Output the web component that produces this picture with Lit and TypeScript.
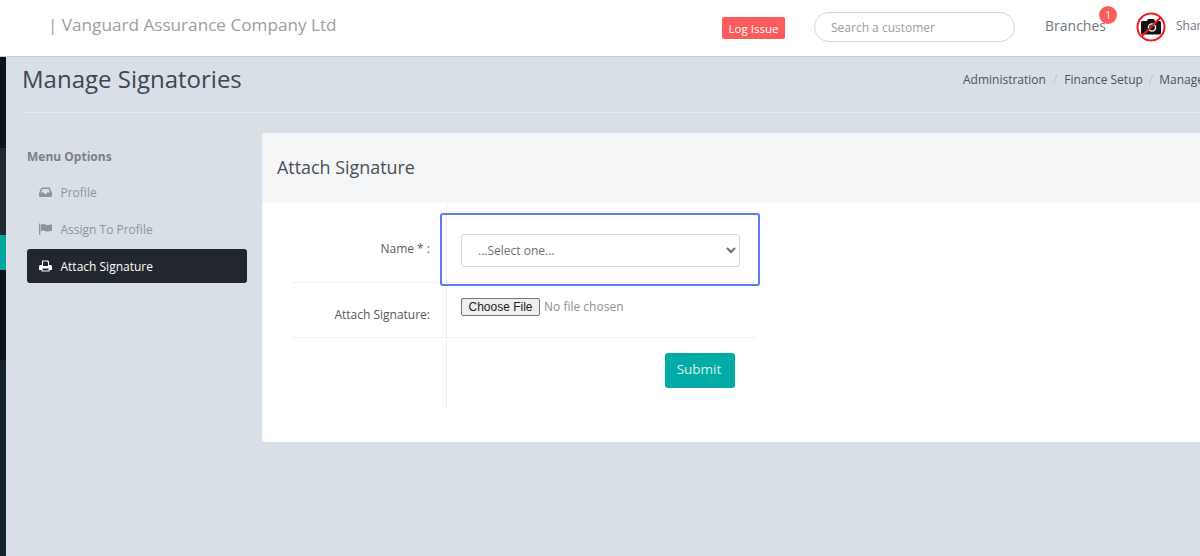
import { LitElement, html, css } from "lit";
import { customElement } from "lit/decorators.js";

@customElement("app-root")
export class AppRoot extends LitElement {
  static styles = css`
    :host { display: block; width: 1200px; height: 556px; overflow: hidden; background: #d9dfe7; font-family: "Open Sans", sans-serif; color: #4a4f55; }
    * { box-sizing: border-box; }
    .top { height: 57px; background: #fff; border-bottom: 1px solid #c6ccd3; display: flex; align-items: center; position: relative; white-space: nowrap; overflow: hidden; }
    .top > * { flex: none; }
    .company { margin-left: 48px; width: 674px; font-size: 17.15px; color: #9a9ea3; margin-top: -7px; }
    .log { width: 63px; height: 22px; background: #fd5c5c; color: #fff; border-radius: 2px; font-size: 11.5px; display: flex; align-items: center; justify-content: center; margin-right: 29px; }
    .search { width: 201px; height: 30px; border: 1px solid #d3d6da; border-radius: 15px; font-size: 12px; color: #9a9ea3; display: flex; align-items: center; padding-left: 16px; margin-right: 30px; margin-top: -2px; }
    .branches { font-size: 14px; color: #74787d; width: 91px; position: relative; margin-top: -5px; }
    .badge { position: absolute; left: 54px; top: -10px; width: 18px; height: 18px; border-radius: 50%; background: #fd5c5c; color: #fff; font-size: 10px; display: flex; align-items: center; justify-content: center; }
    .avatar { width: 30px; height: 30px; margin-right: 10px; margin-top: -2px; display: block; }
    .user { font-size: 12px; color: #74787d; margin-top: -5px; }

    .body { display: flex; height: 499px; }
    .strip { width: 6px; flex: none; display: flex; flex-direction: column; }
    .s1 { height: 91px; background: #0d1419; }
    .s2 { height: 87px; background: #1f2a30; }
    .s3 { height: 35px; background: #00a79d; }
    .s4 { height: 90px; background: #0d1419; }
    .s5 { flex: 1; background: #17232c; }

    .main { flex: 1; min-width: 0; padding-left: 16px; }
    .head { height: 56px; border-bottom: 1px solid #e9edf1; display: flex; align-items: center; white-space: nowrap; padding-bottom: 10px; overflow: hidden; }
    .head h1 { margin: -3px 0 0; width: 941px; font-weight: 400; font-size: 24px; color: #3d4752; flex: none; }
    .crumbs { font-size: 12px; color: #4c5258; display: flex; margin-top: -1px; }
    .crumbs i { font-style: normal; color: #bcc2c9; margin: 0 7px; }
    .crumbs i.tight { margin: 0 6px; }

    .content { display: flex; padding: 20px 0 0 5px; align-items: flex-start; }
    .menu { width: 220px; flex: none; margin-right: 15px; }
    .menu h2 { margin: 0; font-size: 12px; font-weight: 700; color: #7b8086; height: 42px; padding-top: 15px; line-height: 17px; }
    .item { height: 34px; margin-bottom: 3px; padding-left: 12px; display: flex; align-items: center; font-size: 12px; color: #8f949a; border-radius: 3px; }
    .item svg { width: 13px; height: 12px; margin-right: 8.5px; flex: none; fill: currentColor; }
    .item.active { background: #22262e; color: #fff; }

    .card { flex: 1; height: 309px; background: #fff; border-radius: 3px 0 0 3px; position: relative; overflow: hidden; }
    .card-head { height: 70px; background: #f5f6f8; padding: 0 0 2px 15px; display: flex; align-items: center; font-size: 17.9px; color: #4a4f55; }
    .form { width: 463px; margin: 0 0 0 30px; display: grid; grid-template-columns: 155px 1fr; grid-template-rows: 80px 55px 70px; }
    .label { font-size: 12px; color: #55595e; text-align: right; padding-right: 16px; border-right: 1px solid #eeeff1; }
    .field { padding-left: 14px; }
    .r1 { border-bottom: 1px solid #eeeff1; }
    .r2 { border-bottom: 1px solid #eeeff1; }
    .label.r1 { padding-top: 38px; line-height: 16px; }
    .label.r2 { padding-top: 23px; line-height: 17px; }
    .field.r1 { padding-top: 31px; }
    .field.r2 { padding-top: 15px; }
    .field.r3 { padding-top: 15px; padding-right: 20px; display: flex; justify-content: flex-end; align-items: flex-start; }
    select { display: block; width: 279px; height: 33px; border: 1px solid #d6d9dd; border-radius: 3px; background-color: #fff; font-family: "Open Sans", sans-serif; font-size: 12px; color: #6b6f74; padding-left: 12px; outline: none; }
    input[type="file"] { display: block; font-family: "Open Sans", sans-serif; font-size: 12px; color: #8b8f94; width: 279px; }
    input[type="file"]::file-selector-button { font-family: "Liberation Sans", sans-serif; font-size: 12px; color: #222; height: 18px; padding: 0 6.5px; margin-right: 4px; border: 1px solid #767676; border-radius: 2px; background: #efefef; }
    .submit { width: 70px; height: 35px; border: 0; border-radius: 3px; background: #00aca5; color: #d9f3f1; font-family: "Open Sans", sans-serif; font-size: 13.5px; padding: 0 2px 3px 0; }
    .focus { position: absolute; left: 178px; top: 80px; width: 320px; height: 73px; border: 2px solid #5b7cf6; border-radius: 3px; pointer-events: none; }
  `;

  render() {
    return html`
      <div class="top">
        <div class="company">| Vanguard Assurance Company Ltd</div>
        <div class="log">Log Issue</div>
        <div class="search">Search a customer</div>
        <div class="branches">Branches<span class="badge">1</span></div>
        <svg class="avatar" viewBox="0 0 30 30">
          <circle cx="15" cy="15" r="13.5" fill="#fff" stroke="#ee1c25" stroke-width="2"/>
          <path fill="#111" d="M5 10.500a1.500 1.500 0 0 1 1.500-1.500h4.500l1-2h6l1 2h4.500a1.500 1.500 0 0 1 1.500 1.500V21a1.500 1.500 0 0 1-1.500 1.500h-17A1.500 1.500 0 0 1 5 21z"/>
          <circle cx="16" cy="15.500" r="3.600" fill="none" stroke="#fff" stroke-width="1.400"/>
          <path d="M24.500 5.500 5.500 24.500" stroke="#ee1c25" stroke-width="2"/>
        </svg>
        <div class="user">Sharon</div>
      </div>
      <div class="body">
        <div class="strip"><div class="s1"></div><div class="s2"></div><div class="s3"></div><div class="s4"></div><div class="s5"></div></div>
        <div class="main">
          <div class="head">
            <h1>Manage Signatories</h1>
            <div class="crumbs"><span>Administration</span><i>/</i><span>Finance Setup</span><i class="tight">/</i><span>Manage Signatories</span></div>
          </div>
          <div class="content">
            <div class="menu">
              <h2>Menu Options</h2>
              <div class="item">
                <svg viewBox="0 0 13 12"><path fill-rule="evenodd" d="M3 1.500h7a1 1 0 0 1 .9.6L13 7v3a1 1 0 0 1-1 1H1a1 1 0 0 1-1-1V7l2.100-4.900a1 1 0 0 1 .9-.6zM3.400 3 2 6.500h2.800l.7 1.500h2l.7-1.500H11L9.600 3z"/></svg>
                Profile
              </div>
              <div class="item">
                <svg viewBox="0 0 13 12"><path d="M0 .5h1.400V12H0z"/><path d="M2 1.500c1.600-.8 3-.8 4.400 0s2.900.8 4.600 0H13v6.500h-2c-1.700.8-3.200.8-4.600 0s-2.800-.8-4.400 0z"/></svg>
                Assign To Profile
              </div>
              <div class="item active">
                <svg viewBox="0 0 13 12"><path fill-rule="evenodd" d="M3 .5h6l1 1V5h1.500A1.500 1.500 0 0 1 13 6.500V10h-2.500v1.500h-8V10H0V6.500A1.500 1.500 0 0 1 1.500 5H3zM4 1.500V6h5V2.500L8 1.500zM3.500 8.500v2h6v-2z"/></svg>
                Attach Signature
              </div>
            </div>
            <div class="card">
              <div class="card-head">Attach Signature</div>
              <div class="form">
                <div class="label r1">Name * :</div>
                <div class="field r1"><select><option>...Select one...</option></select></div>
                <div class="label r2">Attach Signature:</div>
                <div class="field r2"><input type="file" /></div>
                <div class="label r3"></div>
                <div class="field r3"><button class="submit">Submit</button></div>
              </div>
              <div class="focus"></div>
            </div>
          </div>
        </div>
      </div>
    `;
  }
}
